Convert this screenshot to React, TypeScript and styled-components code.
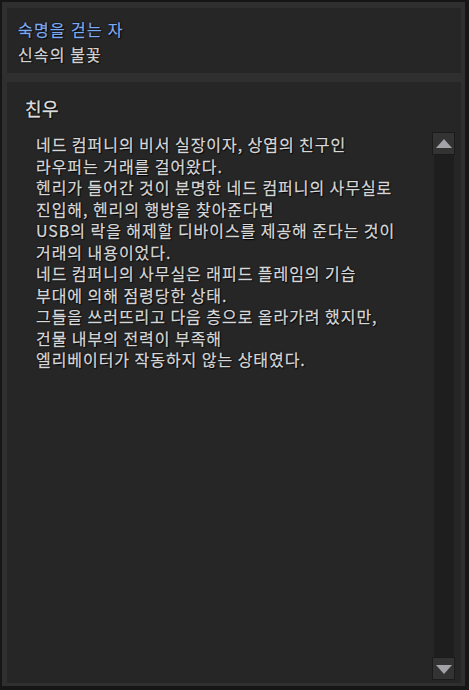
import styled, { createGlobalStyle } from 'styled-components';

const GlobalStyle = createGlobalStyle`
  html, body {
    margin: 0;
    padding: 0;
    background: #161616;
  }
  body {
    font-family: "Noto Sans CJK KR", "Noto Sans", sans-serif;
  }
`;

const lines = [
  '네드 컴퍼니의 비서 실장이자, 상엽의 친구인',
  '라우퍼는 거래를 걸어왔다.',
  '헨리가 들어간 것이 분명한 네드 컴퍼니의 사무실로',
  '진입해, 헨리의 행방을 찾아준다면',
  'USB의 락을 해제할 디바이스를 제공해 준다는 것이',
  '거래의 내용이었다.',
  '네드 컴퍼니의 사무실은 래피드 플레임의 기습',
  '부대에 의해 점령당한 상태.',
  '그들을 쓰러뜨리고 다음 층으로 올라가려 했지만,',
  '건물 내부의 전력이 부족해',
  '엘리베이터가 작동하지 않는 상태였다.'
];

export default function App() {
  return (
    <>
      <GlobalStyle />
      <Frame>
        <TitlePanel>
          <QuestName>숙명을 걷는 자</QuestName>
          <QuestSub>신속의 불꽃</QuestSub>
        </TitlePanel>
        <BodyPanel>
          <Heading>친우</Heading>
          <ContentRow>
            <Story>
              {lines.map((l, i) => (
                <p key={i}>{l}</p>
              ))}
            </Story>
            <Scrollbar>
              <ScrollButton>
                <Arrow dir="up" />
              </ScrollButton>
              <Track />
              <ScrollButton>
                <Arrow dir="down" />
              </ScrollButton>
            </Scrollbar>
          </ContentRow>
        </BodyPanel>
      </Frame>
    </>
  );
}

const Frame = styled.div`
  box-sizing: border-box;
  margin: 2px 4px 4px 2px;
  width: 463px;
  height: 684px;
  background: #2f2f2f;
  padding: 6px 4px 3px 5px;
  display: flex;
  flex-direction: column;
  gap: 9px;
`;

const TitlePanel = styled.div`
  box-sizing: border-box;
  height: 65px;
  background: #262626;
  padding: 11px 11px 0;
  display: flex;
  flex-direction: column;
  gap: 4px;
  text-shadow: 0 0 2px #000, 1px 1px 1px #000;
  -webkit-text-stroke: 0.25px currentColor;
`;

const QuestName = styled.div`
  color: #7eaaf0;
  font-size: 16px;
  line-height: 21px;
  letter-spacing: 1.3px;
`;

const QuestSub = styled.div`
  color: #d4d4d4;
  font-size: 16px;
  line-height: 21px;
  letter-spacing: 1.1px;
`;

const BodyPanel = styled.div`
  flex: 1;
  background: #262626;
  display: flex;
  flex-direction: column;
  padding: 0 6px 3px 0;
  min-height: 0;
`;

const Heading = styled.div`
  color: #dcdcdc;
  font-size: 18px;
  line-height: 22px;
  padding: 15px 0 0 18px;
  height: 35px;
  box-sizing: border-box;
  letter-spacing: 0.5px;
  text-shadow: 0 0 2px #000, 1px 1px 1px #000;
  -webkit-text-stroke: 0.3px currentColor;
`;

const ContentRow = styled.div`
  flex: 1;
  display: flex;
  padding-top: 15px;
  min-height: 0;
`;

const Story = styled.div`
  flex: 1;
  padding: 2px 0 0 29px;
  color: #d8d8d8;
  font-size: 16px;
  line-height: 21.5px;
  letter-spacing: 0.95px;
  text-shadow: 0 0 2px #000, 1px 1px 1px #000;
  -webkit-text-stroke: 0.25px currentColor;
  p {
    margin: 0;
    height: 21.5px;
    white-space: nowrap;
  }
`;

const Scrollbar = styled.div`
  width: 23px;
  display: flex;
  flex-direction: column;
  align-items: center;
`;

const ScrollButton = styled.div`
  box-sizing: border-box;
  width: 23px;
  height: 23px;
  background: #333333;
  border: 1px solid #1b1b1b;
  display: flex;
  align-items: center;
  justify-content: center;
`;

const Track = styled.div`
  flex: 1;
  width: 20px;
  background: #1e1e1e;
`;

const Arrow = styled.div<{ dir: 'up' | 'down' }>`
  width: 0;
  height: 0;
  border-left: 8px solid transparent;
  border-right: 8px solid transparent;
  ${(p) =>
    p.dir === 'up'
      ? 'border-bottom: 9px solid #a2a2a8; margin-bottom: 1px;'
      : 'border-top: 9px solid #a2a2a8; margin-top: 1px;'}
`;
